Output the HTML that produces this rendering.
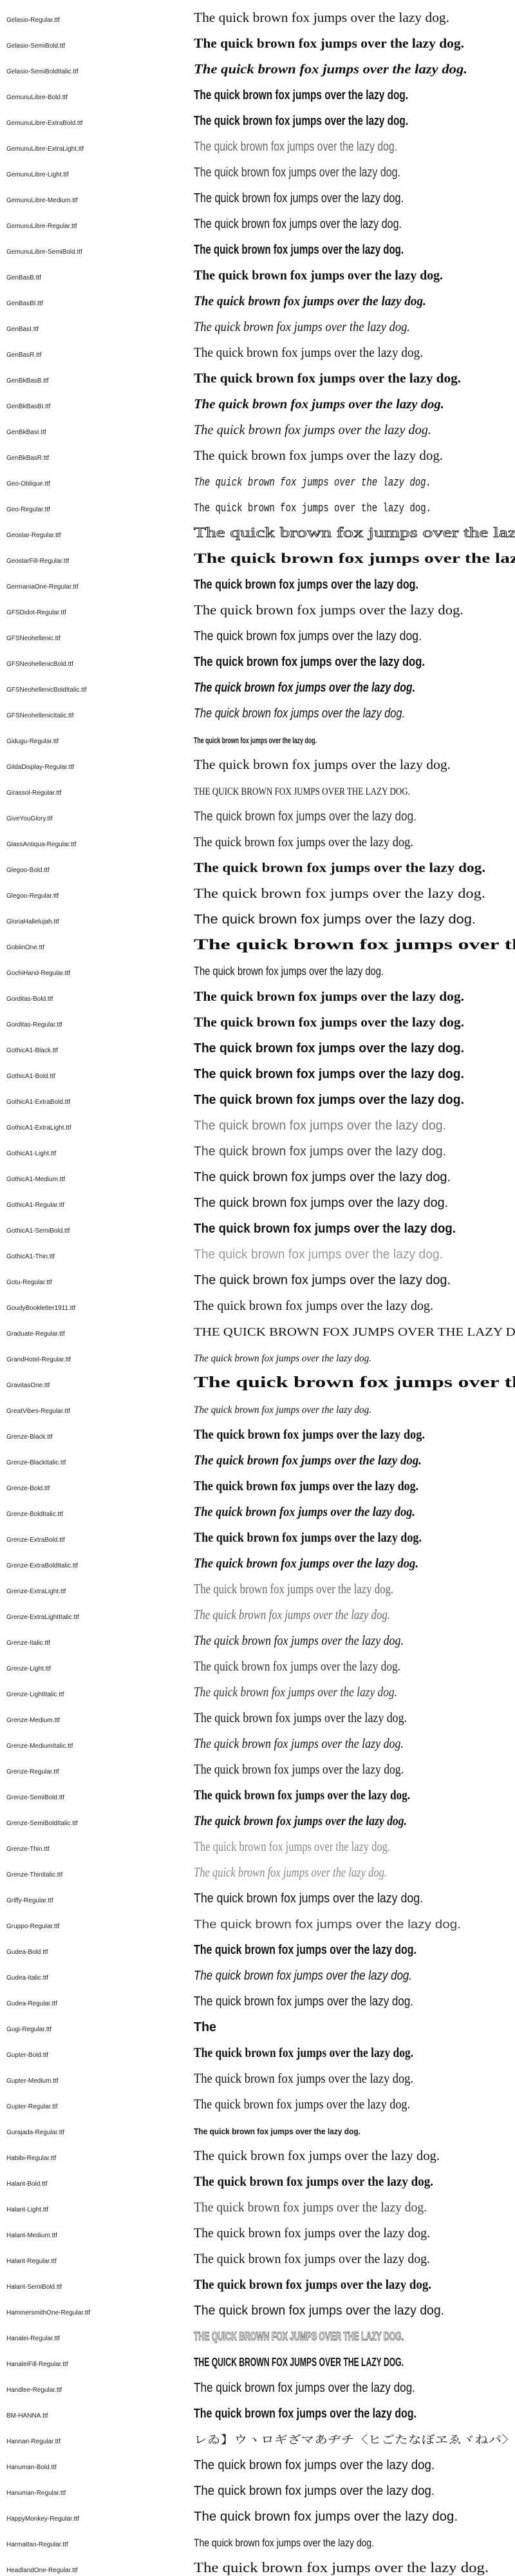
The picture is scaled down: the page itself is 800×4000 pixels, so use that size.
<!DOCTYPE html>
<html><head><meta charset="utf-8"><style>
html,body{margin:0;padding:0;background:#fff;}
svg{display:block}
.l{font-family:"Liberation Sans",sans-serif;font-size:10px;fill:#222}
.s{font-family:"Liberation Serif",serif;font-size:21px;fill:#111}
.a{font-family:"Liberation Sans",sans-serif;font-size:20px;fill:#111}
.m{font-family:"Liberation Mono",monospace;font-size:18px;fill:#111}
.b{font-weight:bold}.i{font-style:italic}
</style></head><body>
<svg width="800" height="4000" xmlns="http://www.w3.org/2000/svg">
<g class="l">
<text x="10" y="34">Gelasio-Regular.ttf</text>
<text x="10" y="74">Gelasio-SemiBold.ttf</text>
<text x="10" y="114">Gelasio-SemiBoldItalic.ttf</text>
<text x="10" y="154">GemunuLibre-Bold.ttf</text>
<text x="10" y="194">GemunuLibre-ExtraBold.ttf</text>
<text x="10" y="234">GemunuLibre-ExtraLight.ttf</text>
<text x="10" y="274">GemunuLibre-Light.ttf</text>
<text x="10" y="314">GemunuLibre-Medium.ttf</text>
<text x="10" y="354">GemunuLibre-Regular.ttf</text>
<text x="10" y="394">GemunuLibre-SemiBold.ttf</text>
<text x="10" y="434">GenBasB.ttf</text>
<text x="10" y="474">GenBasBI.ttf</text>
<text x="10" y="514">GenBasI.ttf</text>
<text x="10" y="554">GenBasR.ttf</text>
<text x="10" y="594">GenBkBasB.ttf</text>
<text x="10" y="634">GenBkBasBI.ttf</text>
<text x="10" y="674">GenBkBasI.ttf</text>
<text x="10" y="714">GenBkBasR.ttf</text>
<text x="10" y="754">Geo-Oblique.ttf</text>
<text x="10" y="794">Geo-Regular.ttf</text>
<text x="10" y="834">Geostar-Regular.ttf</text>
<text x="10" y="874">GeostarFill-Regular.ttf</text>
<text x="10" y="914">GermaniaOne-Regular.ttf</text>
<text x="10" y="954">GFSDidot-Regular.ttf</text>
<text x="10" y="994">GFSNeohellenic.ttf</text>
<text x="10" y="1034">GFSNeohellenicBold.ttf</text>
<text x="10" y="1074">GFSNeohellenicBoldItalic.ttf</text>
<text x="10" y="1114">GFSNeohellenicItalic.ttf</text>
<text x="10" y="1154">Gidugu-Regular.ttf</text>
<text x="10" y="1194">GildaDisplay-Regular.ttf</text>
<text x="10" y="1234">Girassol-Regular.ttf</text>
<text x="10" y="1274">GiveYouGlory.ttf</text>
<text x="10" y="1314">GlassAntiqua-Regular.ttf</text>
<text x="10" y="1354">Glegoo-Bold.ttf</text>
<text x="10" y="1394">Glegoo-Regular.ttf</text>
<text x="10" y="1434">GloriaHallelujah.ttf</text>
<text x="10" y="1474">GoblinOne.ttf</text>
<text x="10" y="1514">GochiHand-Regular.ttf</text>
<text x="10" y="1554">Gorditas-Bold.ttf</text>
<text x="10" y="1594">Gorditas-Regular.ttf</text>
<text x="10" y="1634">GothicA1-Black.ttf</text>
<text x="10" y="1674">GothicA1-Bold.ttf</text>
<text x="10" y="1714">GothicA1-ExtraBold.ttf</text>
<text x="10" y="1754">GothicA1-ExtraLight.ttf</text>
<text x="10" y="1794">GothicA1-Light.ttf</text>
<text x="10" y="1834">GothicA1-Medium.ttf</text>
<text x="10" y="1874">GothicA1-Regular.ttf</text>
<text x="10" y="1914">GothicA1-SemiBold.ttf</text>
<text x="10" y="1954">GothicA1-Thin.ttf</text>
<text x="10" y="1994">Gotu-Regular.ttf</text>
<text x="10" y="2034">GoudyBookletter1911.ttf</text>
<text x="10" y="2074">Graduate-Regular.ttf</text>
<text x="10" y="2114">GrandHotel-Regular.ttf</text>
<text x="10" y="2154">GravitasOne.ttf</text>
<text x="10" y="2194">GreatVibes-Regular.ttf</text>
<text x="10" y="2234">Grenze-Black.ttf</text>
<text x="10" y="2274">Grenze-BlackItalic.ttf</text>
<text x="10" y="2314">Grenze-Bold.ttf</text>
<text x="10" y="2354">Grenze-BoldItalic.ttf</text>
<text x="10" y="2394">Grenze-ExtraBold.ttf</text>
<text x="10" y="2434">Grenze-ExtraBoldItalic.ttf</text>
<text x="10" y="2474">Grenze-ExtraLight.ttf</text>
<text x="10" y="2514">Grenze-ExtraLightItalic.ttf</text>
<text x="10" y="2554">Grenze-Italic.ttf</text>
<text x="10" y="2594">Grenze-Light.ttf</text>
<text x="10" y="2634">Grenze-LightItalic.ttf</text>
<text x="10" y="2674">Grenze-Medium.ttf</text>
<text x="10" y="2714">Grenze-MediumItalic.ttf</text>
<text x="10" y="2754">Grenze-Regular.ttf</text>
<text x="10" y="2794">Grenze-SemiBold.ttf</text>
<text x="10" y="2834">Grenze-SemiBoldItalic.ttf</text>
<text x="10" y="2874">Grenze-Thin.ttf</text>
<text x="10" y="2914">Grenze-ThinItalic.ttf</text>
<text x="10" y="2954">Griffy-Regular.ttf</text>
<text x="10" y="2994">Gruppo-Regular.ttf</text>
<text x="10" y="3034">Gudea-Bold.ttf</text>
<text x="10" y="3074">Gudea-Italic.ttf</text>
<text x="10" y="3114">Gudea-Regular.ttf</text>
<text x="10" y="3154">Gugi-Regular.ttf</text>
<text x="10" y="3194">Gupter-Bold.ttf</text>
<text x="10" y="3234">Gupter-Medium.ttf</text>
<text x="10" y="3274">Gupter-Regular.ttf</text>
<text x="10" y="3314">Gurajada-Regular.ttf</text>
<text x="10" y="3354">Habibi-Regular.ttf</text>
<text x="10" y="3394">Halant-Bold.ttf</text>
<text x="10" y="3434">Halant-Light.ttf</text>
<text x="10" y="3474">Halant-Medium.ttf</text>
<text x="10" y="3514">Halant-Regular.ttf</text>
<text x="10" y="3554">Halant-SemiBold.ttf</text>
<text x="10" y="3594">HammersmithOne-Regular.ttf</text>
<text x="10" y="3634">Hanalei-Regular.ttf</text>
<text x="10" y="3674">HanaleiFill-Regular.ttf</text>
<text x="10" y="3714">Handlee-Regular.ttf</text>
<text x="10" y="3754">BM-HANNA.ttf</text>
<text x="10" y="3794">Hannari-Regular.ttf</text>
<text x="10" y="3834">Hanuman-Bold.ttf</text>
<text x="10" y="3874">Hanuman-Regular.ttf</text>
<text x="10" y="3914">HappyMonkey-Regular.ttf</text>
<text x="10" y="3954">Harmattan-Regular.ttf</text>
<text x="10" y="3994">HeadlandOne-Regular.ttf</text>
</g>
<g>
<text class="s" x="301" y="34" textLength="397" lengthAdjust="spacingAndGlyphs">The quick brown fox jumps over the lazy dog.</text>
<text class="s b" x="301" y="74" textLength="420" lengthAdjust="spacingAndGlyphs">The quick brown fox jumps over the lazy dog.</text>
<text class="s b i" x="301" y="114" textLength="425" lengthAdjust="spacingAndGlyphs">The quick brown fox jumps over the lazy dog.</text>
<text class="a b" x="301" y="154" textLength="333" lengthAdjust="spacingAndGlyphs">The quick brown fox jumps over the lazy dog.</text>
<text class="a b" style="font-weight:900" x="301" y="194" textLength="333" lengthAdjust="spacingAndGlyphs">The quick brown fox jumps over the lazy dog.</text>
<text class="a" style="fill:#666" x="301" y="234" textLength="316" lengthAdjust="spacingAndGlyphs">The quick brown fox jumps over the lazy dog.</text>
<text class="a" style="fill:#333" x="301" y="274" textLength="321" lengthAdjust="spacingAndGlyphs">The quick brown fox jumps over the lazy dog.</text>
<text class="a" x="301" y="314" textLength="326" lengthAdjust="spacingAndGlyphs">The quick brown fox jumps over the lazy dog.</text>
<text class="a" x="301" y="354" textLength="323" lengthAdjust="spacingAndGlyphs">The quick brown fox jumps over the lazy dog.</text>
<text class="a b" x="301" y="394" textLength="326" lengthAdjust="spacingAndGlyphs">The quick brown fox jumps over the lazy dog.</text>
<text class="s b" x="301" y="434" textLength="387" lengthAdjust="spacingAndGlyphs">The quick brown fox jumps over the lazy dog.</text>
<text class="s b i" x="301" y="474" textLength="361" lengthAdjust="spacingAndGlyphs">The quick brown fox jumps over the lazy dog.</text>
<text class="s i" x="301" y="514" textLength="336" lengthAdjust="spacingAndGlyphs">The quick brown fox jumps over the lazy dog.</text>
<text class="s" x="301" y="554" textLength="356" lengthAdjust="spacingAndGlyphs">The quick brown fox jumps over the lazy dog.</text>
<text class="s b" x="301" y="594" textLength="415" lengthAdjust="spacingAndGlyphs">The quick brown fox jumps over the lazy dog.</text>
<text class="s b i" x="301" y="634" textLength="389" lengthAdjust="spacingAndGlyphs">The quick brown fox jumps over the lazy dog.</text>
<text class="s i" x="301" y="674" textLength="369" lengthAdjust="spacingAndGlyphs">The quick brown fox jumps over the lazy dog.</text>
<text class="s" x="301" y="714" textLength="387" lengthAdjust="spacingAndGlyphs">The quick brown fox jumps over the lazy dog.</text>
<text class="m i" x="301" y="754" textLength="369" lengthAdjust="spacingAndGlyphs">The quick brown fox jumps over the lazy dog.</text>
<text class="m" x="301" y="794" textLength="369" lengthAdjust="spacingAndGlyphs">The quick brown fox jumps over the lazy dog.</text>
<text class="s" style="font-size:22px;fill:#fff;stroke:#111;stroke-width:0.8" x="301" y="834" textLength="580" lengthAdjust="spacingAndGlyphs">The quick brown fox jumps over the lazy dog.</text>
<text class="s b" style="font-size:22px" x="301" y="874" textLength="580" lengthAdjust="spacingAndGlyphs">The quick brown fox jumps over the lazy dog.</text>
<text class="a b" x="301" y="914" textLength="349" lengthAdjust="spacingAndGlyphs">The quick brown fox jumps over the lazy dog.</text>
<text class="s" x="301" y="954" textLength="419" lengthAdjust="spacingAndGlyphs">The quick brown fox jumps over the lazy dog.</text>
<text class="a" x="301" y="994" textLength="354" lengthAdjust="spacingAndGlyphs">The quick brown fox jumps over the lazy dog.</text>
<text class="a b" x="301" y="1034" textLength="359" lengthAdjust="spacingAndGlyphs">The quick brown fox jumps over the lazy dog.</text>
<text class="a b i" x="301" y="1074" textLength="344" lengthAdjust="spacingAndGlyphs">The quick brown fox jumps over the lazy dog.</text>
<text class="a i" x="301" y="1114" textLength="328" lengthAdjust="spacingAndGlyphs">The quick brown fox jumps over the lazy dog.</text>
<text class="a b" style="font-size:13px" x="301" y="1154" textLength="191" lengthAdjust="spacingAndGlyphs">The quick brown fox jumps over the lazy dog.</text>
<text class="s" x="301" y="1194" textLength="399" lengthAdjust="spacingAndGlyphs">The quick brown fox jumps over the lazy dog.</text>
<text class="s" style="font-size:16px" x="301" y="1234" textLength="336" lengthAdjust="spacingAndGlyphs">THE QUICK BROWN FOX JUMPS OVER THE LAZY DOG.</text>
<text class="a" style="fill:#333" x="301" y="1274" textLength="346" lengthAdjust="spacingAndGlyphs">The quick brown fox jumps over the lazy dog.</text>
<text class="s" x="301" y="1314" textLength="341" lengthAdjust="spacingAndGlyphs">The quick brown fox jumps over the lazy dog.</text>
<text class="s b" x="301" y="1354" textLength="453" lengthAdjust="spacingAndGlyphs">The quick brown fox jumps over the lazy dog.</text>
<text class="s" x="301" y="1394" textLength="453" lengthAdjust="spacingAndGlyphs">The quick brown fox jumps over the lazy dog.</text>
<text class="a" x="301" y="1434" textLength="438" lengthAdjust="spacingAndGlyphs">The quick brown fox jumps over the lazy dog.</text>
<text class="s b" style="font-size:23px" x="301" y="1474" textLength="665" lengthAdjust="spacingAndGlyphs">The quick brown fox jumps over the lazy dog.</text>
<text class="a" style="font-size:18px" x="301" y="1514" textLength="295" lengthAdjust="spacingAndGlyphs">The quick brown fox jumps over the lazy dog.</text>
<text class="s b" x="301" y="1554" textLength="420" lengthAdjust="spacingAndGlyphs">The quick brown fox jumps over the lazy dog.</text>
<text class="s b" x="301" y="1594" textLength="420" lengthAdjust="spacingAndGlyphs">The quick brown fox jumps over the lazy dog.</text>
<text class="a b" x="301" y="1634" textLength="420" lengthAdjust="spacingAndGlyphs">The quick brown fox jumps over the lazy dog.</text>
<text class="a b" x="301" y="1674" textLength="420" lengthAdjust="spacingAndGlyphs">The quick brown fox jumps over the lazy dog.</text>
<text class="a b" x="301" y="1714" textLength="420" lengthAdjust="spacingAndGlyphs">The quick brown fox jumps over the lazy dog.</text>
<text class="a" style="fill:#777" x="301" y="1754" textLength="392" lengthAdjust="spacingAndGlyphs">The quick brown fox jumps over the lazy dog.</text>
<text class="a" style="fill:#444" x="301" y="1794" textLength="392" lengthAdjust="spacingAndGlyphs">The quick brown fox jumps over the lazy dog.</text>
<text class="a" x="301" y="1834" textLength="399" lengthAdjust="spacingAndGlyphs">The quick brown fox jumps over the lazy dog.</text>
<text class="a" x="301" y="1874" textLength="395" lengthAdjust="spacingAndGlyphs">The quick brown fox jumps over the lazy dog.</text>
<text class="a b" x="301" y="1914" textLength="407" lengthAdjust="spacingAndGlyphs">The quick brown fox jumps over the lazy dog.</text>
<text class="a" style="fill:#999" x="301" y="1954" textLength="387" lengthAdjust="spacingAndGlyphs">The quick brown fox jumps over the lazy dog.</text>
<text class="a" x="301" y="1994" textLength="399" lengthAdjust="spacingAndGlyphs">The quick brown fox jumps over the lazy dog.</text>
<text class="s" x="301" y="2034" textLength="372" lengthAdjust="spacingAndGlyphs">The quick brown fox jumps over the lazy dog.</text>
<text class="s" style="font-size:18px" x="301" y="2074" textLength="535" lengthAdjust="spacingAndGlyphs">THE QUICK BROWN FOX JUMPS OVER THE LAZY DOG.</text>
<text class="s i" style="font-size:16px" x="301" y="2114" textLength="276" lengthAdjust="spacingAndGlyphs">The quick brown fox jumps over the lazy dog.</text>
<text class="s b" style="font-size:24px;font-weight:900" x="301" y="2154" textLength="665" lengthAdjust="spacingAndGlyphs">The quick brown fox jumps over the lazy dog.</text>
<text class="s i" style="font-size:16px" x="301" y="2194" textLength="276" lengthAdjust="spacingAndGlyphs">The quick brown fox jumps over the lazy dog.</text>
<text class="s b" x="301" y="2234" textLength="359" lengthAdjust="spacingAndGlyphs">The quick brown fox jumps over the lazy dog.</text>
<text class="s b i" x="301" y="2274" textLength="354" lengthAdjust="spacingAndGlyphs">The quick brown fox jumps over the lazy dog.</text>
<text class="s b" x="301" y="2314" textLength="349" lengthAdjust="spacingAndGlyphs">The quick brown fox jumps over the lazy dog.</text>
<text class="s b i" x="301" y="2354" textLength="344" lengthAdjust="spacingAndGlyphs">The quick brown fox jumps over the lazy dog.</text>
<text class="s b" x="301" y="2394" textLength="354" lengthAdjust="spacingAndGlyphs">The quick brown fox jumps over the lazy dog.</text>
<text class="s b i" x="301" y="2434" textLength="349" lengthAdjust="spacingAndGlyphs">The quick brown fox jumps over the lazy dog.</text>
<text class="s" style="fill:#666" x="301" y="2474" textLength="310" lengthAdjust="spacingAndGlyphs">The quick brown fox jumps over the lazy dog.</text>
<text class="s i" style="fill:#666" x="301" y="2514" textLength="305" lengthAdjust="spacingAndGlyphs">The quick brown fox jumps over the lazy dog.</text>
<text class="s i" x="301" y="2554" textLength="326" lengthAdjust="spacingAndGlyphs">The quick brown fox jumps over the lazy dog.</text>
<text class="s" style="fill:#333" x="301" y="2594" textLength="321" lengthAdjust="spacingAndGlyphs">The quick brown fox jumps over the lazy dog.</text>
<text class="s i" style="fill:#333" x="301" y="2634" textLength="316" lengthAdjust="spacingAndGlyphs">The quick brown fox jumps over the lazy dog.</text>
<text class="s" x="301" y="2674" textLength="331" lengthAdjust="spacingAndGlyphs">The quick brown fox jumps over the lazy dog.</text>
<text class="s i" x="301" y="2714" textLength="326" lengthAdjust="spacingAndGlyphs">The quick brown fox jumps over the lazy dog.</text>
<text class="s" x="301" y="2754" textLength="326" lengthAdjust="spacingAndGlyphs">The quick brown fox jumps over the lazy dog.</text>
<text class="s b" x="301" y="2794" textLength="336" lengthAdjust="spacingAndGlyphs">The quick brown fox jumps over the lazy dog.</text>
<text class="s b i" x="301" y="2834" textLength="331" lengthAdjust="spacingAndGlyphs">The quick brown fox jumps over the lazy dog.</text>
<text class="s" style="fill:#888" x="301" y="2874" textLength="305" lengthAdjust="spacingAndGlyphs">The quick brown fox jumps over the lazy dog.</text>
<text class="s i" style="fill:#888" x="301" y="2914" textLength="300" lengthAdjust="spacingAndGlyphs">The quick brown fox jumps over the lazy dog.</text>
<text class="a" x="301" y="2954" textLength="356" lengthAdjust="spacingAndGlyphs">The quick brown fox jumps over the lazy dog.</text>
<text class="a" style="font-size:18px;fill:#444" x="301" y="2994" textLength="415" lengthAdjust="spacingAndGlyphs">The quick brown fox jumps over the lazy dog.</text>
<text class="a b" x="301" y="3034" textLength="346" lengthAdjust="spacingAndGlyphs">The quick brown fox jumps over the lazy dog.</text>
<text class="a i" x="301" y="3074" textLength="339" lengthAdjust="spacingAndGlyphs">The quick brown fox jumps over the lazy dog.</text>
<text class="a" x="301" y="3114" textLength="341" lengthAdjust="spacingAndGlyphs">The quick brown fox jumps over the lazy dog.</text>
<text class="a b" x="301" y="3154" textLength="35" lengthAdjust="spacingAndGlyphs">The</text>
<text class="s b" x="301" y="3194" textLength="341" lengthAdjust="spacingAndGlyphs">The quick brown fox jumps over the lazy dog.</text>
<text class="s" x="301" y="3234" textLength="341" lengthAdjust="spacingAndGlyphs">The quick brown fox jumps over the lazy dog.</text>
<text class="s" x="301" y="3274" textLength="336" lengthAdjust="spacingAndGlyphs">The quick brown fox jumps over the lazy dog.</text>
<text class="a b" style="font-size:13px" x="301" y="3314" textLength="259" lengthAdjust="spacingAndGlyphs">The quick brown fox jumps over the lazy dog.</text>
<text class="s" x="301" y="3354" textLength="382" lengthAdjust="spacingAndGlyphs">The quick brown fox jumps over the lazy dog.</text>
<text class="s b" x="301" y="3394" textLength="372" lengthAdjust="spacingAndGlyphs">The quick brown fox jumps over the lazy dog.</text>
<text class="s" style="fill:#444" x="301" y="3434" textLength="362" lengthAdjust="spacingAndGlyphs">The quick brown fox jumps over the lazy dog.</text>
<text class="s" x="301" y="3474" textLength="367" lengthAdjust="spacingAndGlyphs">The quick brown fox jumps over the lazy dog.</text>
<text class="s" x="301" y="3514" textLength="367" lengthAdjust="spacingAndGlyphs">The quick brown fox jumps over the lazy dog.</text>
<text class="s b" x="301" y="3554" textLength="369" lengthAdjust="spacingAndGlyphs">The quick brown fox jumps over the lazy dog.</text>
<text class="a" x="301" y="3594" textLength="389" lengthAdjust="spacingAndGlyphs">The quick brown fox jumps over the lazy dog.</text>
<text class="a b" style="font-size:18px;fill:#fff;stroke:#333;stroke-width:0.8" x="301" y="3634" textLength="326" lengthAdjust="spacingAndGlyphs">THE QUICK BROWN FOX JUMPS OVER THE LAZY DOG.</text>
<text class="a b" style="font-size:18px;font-weight:900" x="301" y="3674" textLength="326" lengthAdjust="spacingAndGlyphs">THE QUICK BROWN FOX JUMPS OVER THE LAZY DOG.</text>
<text class="a" x="301" y="3714" textLength="344" lengthAdjust="spacingAndGlyphs">The quick brown fox jumps over the lazy dog.</text>
<text class="a b" x="301" y="3754" textLength="346" lengthAdjust="spacingAndGlyphs">The quick brown fox jumps over the lazy dog.</text>
<text x="301" y="3794" style="font-family:'Liberation Serif','Noto Serif CJK SC','Noto Sans CJK JP',serif;font-size:17px;fill:#222" textLength="520" lengthAdjust="spacingAndGlyphs">レゐ】ウヽロギざマあヂチ〈ヒごたなぼヱゑヾねパ〉カ</text>
<text class="a" x="301" y="3834" textLength="374" lengthAdjust="spacingAndGlyphs">The quick brown fox jumps over the lazy dog.</text>
<text class="a" x="301" y="3874" textLength="374" lengthAdjust="spacingAndGlyphs">The quick brown fox jumps over the lazy dog.</text>
<text class="a" x="301" y="3914" textLength="410" lengthAdjust="spacingAndGlyphs">The quick brown fox jumps over the lazy dog.</text>
<text class="a" style="font-size:17px" x="301" y="3954" textLength="280" lengthAdjust="spacingAndGlyphs">The quick brown fox jumps over the lazy dog.</text>
<text class="s" style="font-size:22px" x="301" y="3994" textLength="458" lengthAdjust="spacingAndGlyphs">The quick brown fox jumps over the lazy dog.</text>
</g>
</svg>
</body></html>
